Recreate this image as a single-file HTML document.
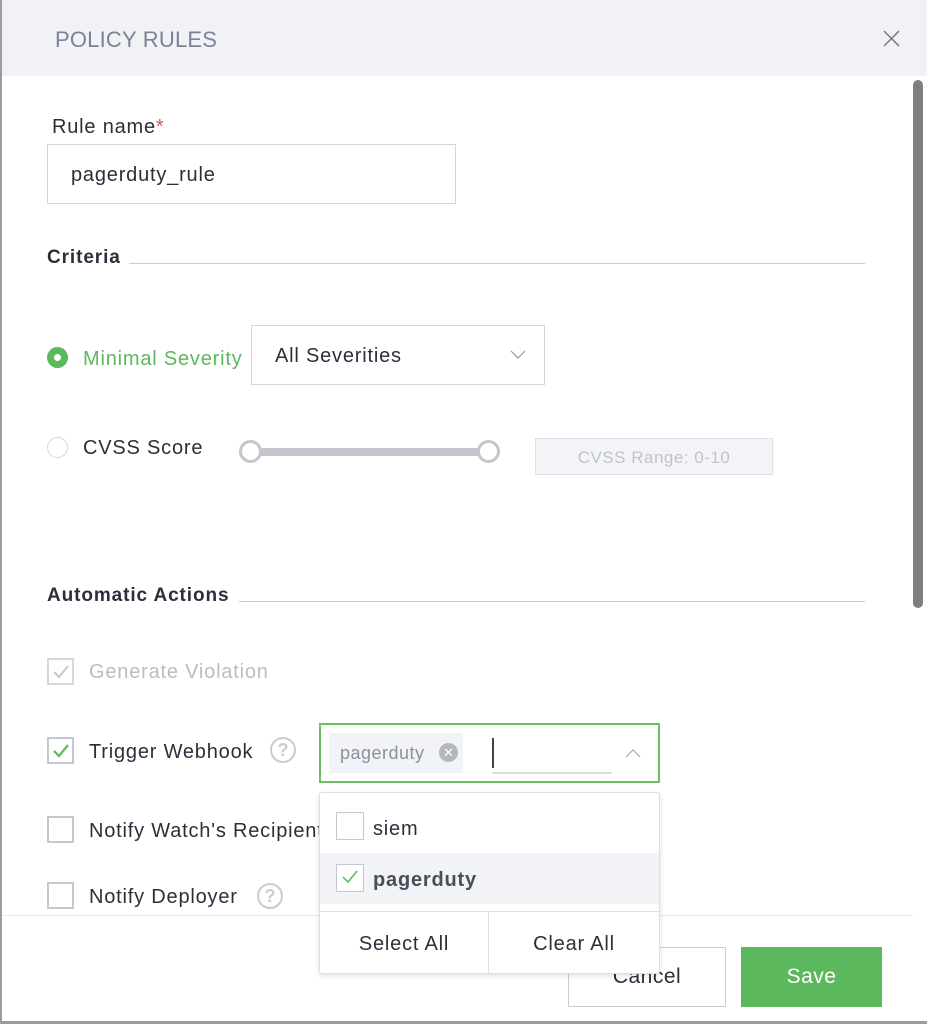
<!DOCTYPE html>
<html><head><meta charset="utf-8"><style>
*{box-sizing:border-box;margin:0;padding:0}
body{width:927px;height:1024px;position:relative;overflow:hidden;background:#fff;font-family:"Liberation Sans",sans-serif;color:#2b2f3a}
.a{position:absolute;white-space:nowrap}
.t{font-size:20px;line-height:24px;letter-spacing:0.8px}
.cb{position:absolute;width:27px;height:27px;border:2px solid #c6c8cf;background:#fff}
.q{position:absolute;width:26px;height:26px;border:2px solid #c9cbd1;border-radius:50%;color:#c9cbd1;font-size:18px;line-height:22px;text-align:center;font-weight:bold}
</style></head><body>
<div class="a" style="left:0;top:0;width:927px;height:76px;background:#f1f2f5"></div>
<div class="a" style="left:0;top:0;width:2px;height:1024px;background:#9a9ca2"></div>
<div class="a" style="left:0;top:1021px;width:927px;height:3px;background:#9a9ca2"></div>
<div class="a" style="left:55px;top:27px;font-size:22px;color:#7d8295;letter-spacing:0.2px">POLICY RULES</div>
<svg class="a" style="left:883px;top:30px" width="17" height="17"><path d="M1 1L16 16M16 1L1 16" stroke="#777" stroke-width="1.5"/></svg>
<div class="a" style="left:913px;top:80px;width:10px;height:528px;background:#7f7f7f;border-radius:5px"></div>

<div class="a t" style="left:52px;top:115px">Rule name<span style="color:#d9534f">*</span></div>
<div class="a t" style="left:47px;top:144px;width:409px;height:60px;border:1px solid #d3d6dd;padding:18px 23px">pagerduty_rule</div>

<div class="a t" style="left:47px;top:246px;font-weight:bold;font-size:19px;letter-spacing:0.9px">Criteria</div>
<div class="a" style="left:129px;top:263px;width:736px;height:1px;background:#c9ccd3"></div>

<div class="a" style="left:47px;top:347px;width:21px;height:21px;border-radius:50%;background:#5cb85c"></div>
<div class="a" style="left:54px;top:354px;width:7px;height:7px;border-radius:50%;background:#fff"></div>
<div class="a t" style="left:83px;top:347px;color:#5cb85c">Minimal Severity</div>
<div class="a t" style="left:251px;top:325px;width:294px;height:60px;border:1px solid #d3d6dd;padding:18px 23px">All Severities</div>
<svg class="a" style="left:510px;top:350px" width="16" height="10"><path d="M1 1L8 8L15 1" stroke="#999" fill="none" stroke-width="1.2"/></svg>

<div class="a" style="left:47px;top:437px;width:21px;height:21px;border-radius:50%;border:1.5px solid #d5d7dd"></div>
<div class="a t" style="left:83px;top:436px">CVSS Score</div>
<div class="a" style="left:250px;top:448px;width:238px;height:8px;background:#c3c6cd"></div>
<div class="a" style="left:239px;top:440px;width:23px;height:23px;border-radius:50%;border:3px solid #c3c6cd;background:#fff"></div>
<div class="a" style="left:477px;top:440px;width:23px;height:23px;border-radius:50%;border:3px solid #c3c6cd;background:#fff"></div>
<div class="a" style="left:535px;top:438px;width:238px;height:37px;border:1px solid #dfe1e6;background:#f3f4f7;color:#c0c3ca;font-size:17px;line-height:37px;text-align:center;letter-spacing:0.5px">CVSS Range: 0-10</div>

<div class="a t" style="left:47px;top:584px;font-weight:bold;font-size:19px;letter-spacing:0.9px">Automatic Actions</div>
<div class="a" style="left:239px;top:601px;width:626px;height:1px;background:#c9ccd3"></div>

<div class="cb" style="left:47px;top:658px;border-color:#d6d8dd"></div>
<svg class="a" style="left:52px;top:664px" width="18" height="16"><path d="M2 8L7 13L16 2" stroke="#c6c8cf" fill="none" stroke-width="2"/></svg>
<div class="a t" style="left:89px;top:660px;color:#b9bcc4">Generate Violation</div>

<div class="cb" style="left:47px;top:737px"></div>
<svg class="a" style="left:52px;top:743px" width="18" height="16"><path d="M2 8L7 13L16 2" stroke="#5cb85c" fill="none" stroke-width="2.2"/></svg>
<div class="a t" style="left:89px;top:740px">Trigger Webhook</div>
<div class="q" style="left:270px;top:737px">?</div>

<div class="a" style="left:319px;top:723px;width:341px;height:60px;border:2px solid #6dbd63"></div>
<div class="a" style="left:329px;top:733px;width:134px;height:40px;background:#f2f3f6"></div>
<div class="a" style="left:340px;top:743px;font-size:18px;color:#8c90a0;letter-spacing:0.5px">pagerduty</div>
<div class="a" style="left:439px;top:743px;width:19px;height:19px;border-radius:50%;background:#b4b7bf;color:#fff;font-size:13px;line-height:19px;text-align:center">✕</div>
<div class="a" style="left:492px;top:738px;width:2px;height:30px;background:#444"></div>
<div class="a" style="left:492px;top:772px;width:120px;height:2px;background:#dadce1"></div>
<svg class="a" style="left:625px;top:748px" width="16" height="10"><path d="M1 9L8 2L15 9" stroke="#aaa" fill="none" stroke-width="1.2"/></svg>

<div class="cb" style="left:47px;top:816px"></div>
<div class="a t" style="left:89px;top:819px">Notify Watch's Recipient</div>
<div class="cb" style="left:47px;top:882px"></div>
<div class="a t" style="left:89px;top:885px">Notify Deployer</div>
<div class="q" style="left:257px;top:883px">?</div>

<div class="a" style="left:2px;top:915px;width:911px;height:1px;background:#e6e8ec"></div>
<div class="a" style="left:568px;top:947px;width:158px;height:60px;border:1px solid #c9ccd3;font-size:21px;line-height:58px;text-align:center;letter-spacing:0.5px">Cancel</div>
<div class="a" style="left:741px;top:947px;width:141px;height:60px;background:#5cb85c;color:#fff;font-size:21px;line-height:60px;text-align:center;letter-spacing:0.5px">Save</div>

<div class="a" style="left:319px;top:792px;width:341px;height:182px;background:#fff;border:1px solid #dcdee3;border-radius:3px;box-shadow:0 2px 6px rgba(0,0,0,0.12)"></div>
<div class="cb" style="left:336px;top:812px;width:28px;height:28px;border-width:1.5px"></div>
<div class="a t" style="left:373px;top:817px">siem</div>
<div class="a" style="left:320px;top:853px;width:339px;height:51px;background:#f2f3f6"></div>
<div class="cb" style="left:336px;top:864px;width:28px;height:28px;border-width:1.5px"></div>
<svg class="a" style="left:341px;top:869px" width="18" height="16"><path d="M2 8L7 13L16 2" stroke="#5cb85c" fill="none" stroke-width="1.5"/></svg>
<div class="a t" style="left:373px;top:868px;font-weight:bold;color:#4a4e5a">pagerduty</div>
<div class="a" style="left:320px;top:911px;width:339px;height:1px;background:#dcdee3"></div>
<div class="a" style="left:488px;top:911px;width:1px;height:62px;background:#dcdee3"></div>
<div class="a t" style="left:320px;top:932px;width:168px;text-align:center">Select All</div>
<div class="a t" style="left:489px;top:932px;width:170px;text-align:center">Clear All</div>
</body></html>
